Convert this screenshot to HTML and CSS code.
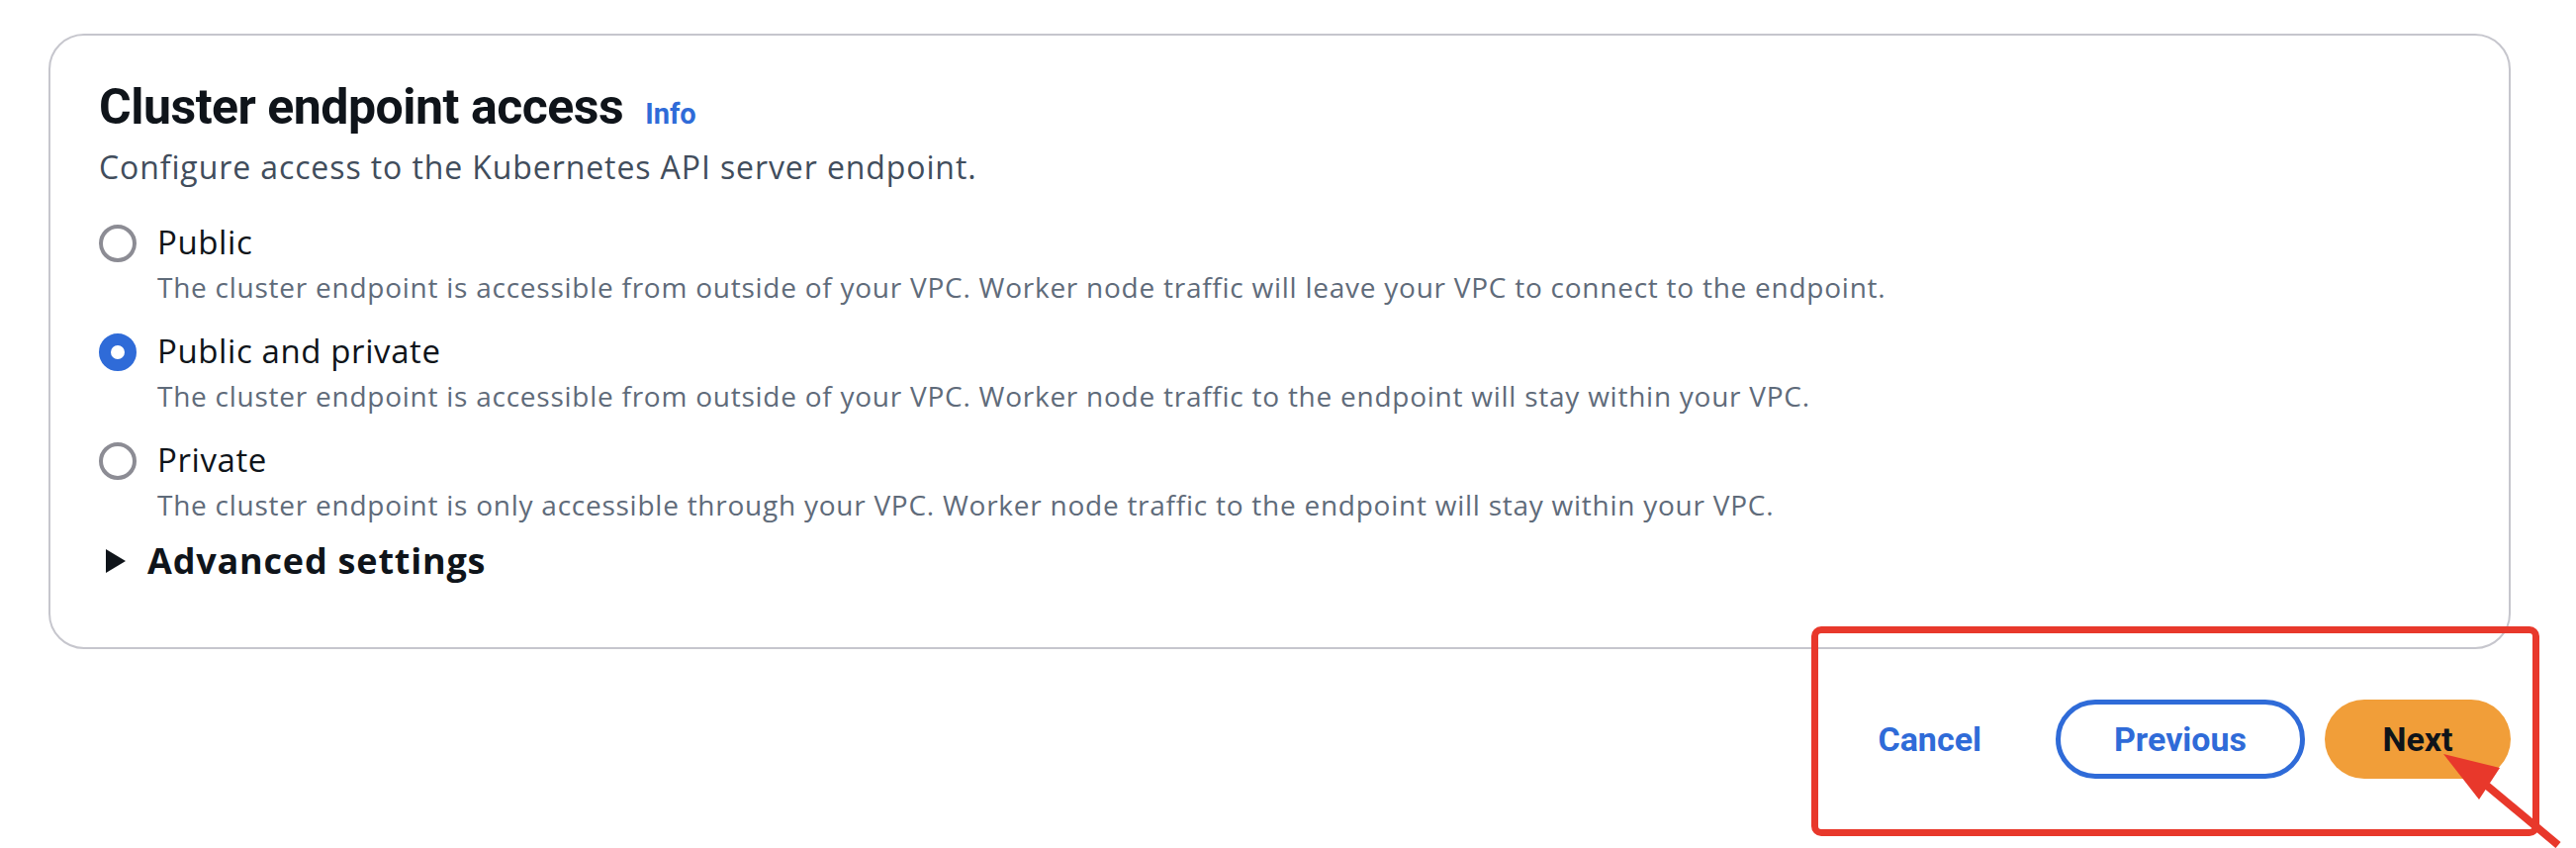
FILE: index.html
```html
<!DOCTYPE html>
<html lang="en">
<head>
<meta charset="utf-8">
<title>Cluster endpoint access</title>
<link rel="stylesheet" href="styles.css">
</head>
<body>
<div class="page">
  <section class="card">
    <h2 class="title">Cluster endpoint access <a class="info" href="#">Info</a></h2>
    <p class="lead">Configure access to the Kubernetes API server endpoint.</p>
    <div class="radios">
      <div class="radio">
        <span class="dot"></span>
        <div class="rtext">
          <div class="rlabel">Public</div>
          <div class="rdesc">The cluster endpoint is accessible from outside of your VPC. Worker node traffic will leave your VPC to connect to the endpoint.</div>
        </div>
      </div>
      <div class="radio">
        <span class="dot checked"></span>
        <div class="rtext">
          <div class="rlabel">Public and private</div>
          <div class="rdesc">The cluster endpoint is accessible from outside of your VPC. Worker node traffic to the endpoint will stay within your VPC.</div>
        </div>
      </div>
      <div class="radio">
        <span class="dot"></span>
        <div class="rtext">
          <div class="rlabel">Private</div>
          <div class="rdesc">The cluster endpoint is only accessible through your VPC. Worker node traffic to the endpoint will stay within your VPC.</div>
        </div>
      </div>
    </div>
    <div class="advanced"><span class="caret"></span><span>Advanced settings</span></div>
  </section>
  <div class="actions">
    <a class="btn-link" href="#">Cancel</a>
    <button class="btn btn-normal">Previous</button>
    <button class="btn btn-primary">Next</button>
  </div>
</div>
<div class="highlight"></div>
<svg class="arrow" width="140" height="110" viewBox="0 0 140 110">
  <line x1="54" y1="34" x2="126" y2="94" stroke="#e8382b" stroke-width="8"/>
  <polygon points="10,2 67,16 46,48" fill="#e8382b"/>
</svg>
</body>
</html>
```
FILE: styles.css
```css
html, body {
  margin: 0;
  padding: 0;
  background: #ffffff;
}
body {
  font-family: Roboto, "Noto Sans", sans-serif;
  color: #0f141a;
  width: 2604px;
  height: 857px;
  overflow: hidden;
  position: relative;
}
.page {
  padding: 34px 66px 0 49px;
}
.card {
  border: 2px solid #c6c6cd;
  border-radius: 36px;
  height: 618px;
  box-sizing: content-box;
  padding: 0 49px;
}
.title {
  margin: 0;
  padding-top: 42px;
  font-size: 50px;
  line-height: 60px;
  font-weight: 700;
  letter-spacing: -0.5px;
  display: flex;
  align-items: baseline;
  gap: 22px;
}
.info {
  color: #2f6bd8;
  font-size: 29px;
  font-weight: 700;
  text-decoration: none;
  letter-spacing: 0;
}
.lead {
  margin: 2px 0 0;
  font-family: "Open Sans", Roboto, sans-serif;
  font-size: 32px;
  line-height: 44px;
  letter-spacing: 0.9px;
  color: #414d5c;
}
.radios {
  margin-top: 32px;
  display: flex;
  flex-direction: column;
  gap: 22px;
}
.radio {
  display: flex;
  gap: 21px;
  align-items: flex-start;
}
.dot {
  flex: none;
  width: 38px;
  height: 38px;
  box-sizing: border-box;
  border: 4px solid #8c8c94;
  border-radius: 50%;
  margin-top: 4px;
}
.dot.checked {
  border: 12px solid #2f6bd8;
}
.rtext {
  font-family: "Open Sans", Roboto, sans-serif;
}
.rlabel {
  font-size: 33px;
  line-height: 44px;
  letter-spacing: 0.6px;
  color: #0f141a;
}
.rdesc {
  margin-top: 2px;
  font-size: 28px;
  line-height: 42px;
  letter-spacing: 0.75px;
  color: #5f6b7a;
}
.advanced {
  margin-top: 12px;
  display: flex;
  align-items: center;
  gap: 22px;
  font-family: "Open Sans", Roboto, sans-serif;
  font-size: 36px;
  line-height: 48px;
  font-weight: 700;
  letter-spacing: 0.8px;
  padding-left: 7px;
}
.caret {
  width: 0;
  height: 0;
  border-top: 12px solid transparent;
  border-bottom: 12px solid transparent;
  border-left: 20px solid #0f141a;
}
.actions {
  margin-top: 51px;
  display: flex;
  justify-content: flex-end;
  align-items: center;
  gap: 20px;
  padding-right: 0;
}
.btn-link {
  color: #2f6bd8;
  font-size: 34px;
  font-weight: 700;
  text-decoration: none;
  margin-right: 55px;
}
.btn {
  font-family: inherit;
  font-size: 34px;
  font-weight: 700;
  height: 80px;
  border-radius: 40px;
  box-sizing: border-box;
  cursor: pointer;
}
.btn-normal {
  width: 252px;
  background: #ffffff;
  border: 5px solid #2f6bd8;
  color: #2f6bd8;
}
.btn-primary {
  width: 188px;
  background: #f19e39;
  border: none;
  color: #0f141a;
}
.highlight {
  position: absolute;
  left: 1831px;
  top: 633px;
  width: 736px;
  height: 212px;
  box-sizing: border-box;
  border: 7px solid #e8382b;
  border-radius: 10px;
}
.arrow {
  position: absolute;
  left: 2460px;
  top: 760px;
}
```
